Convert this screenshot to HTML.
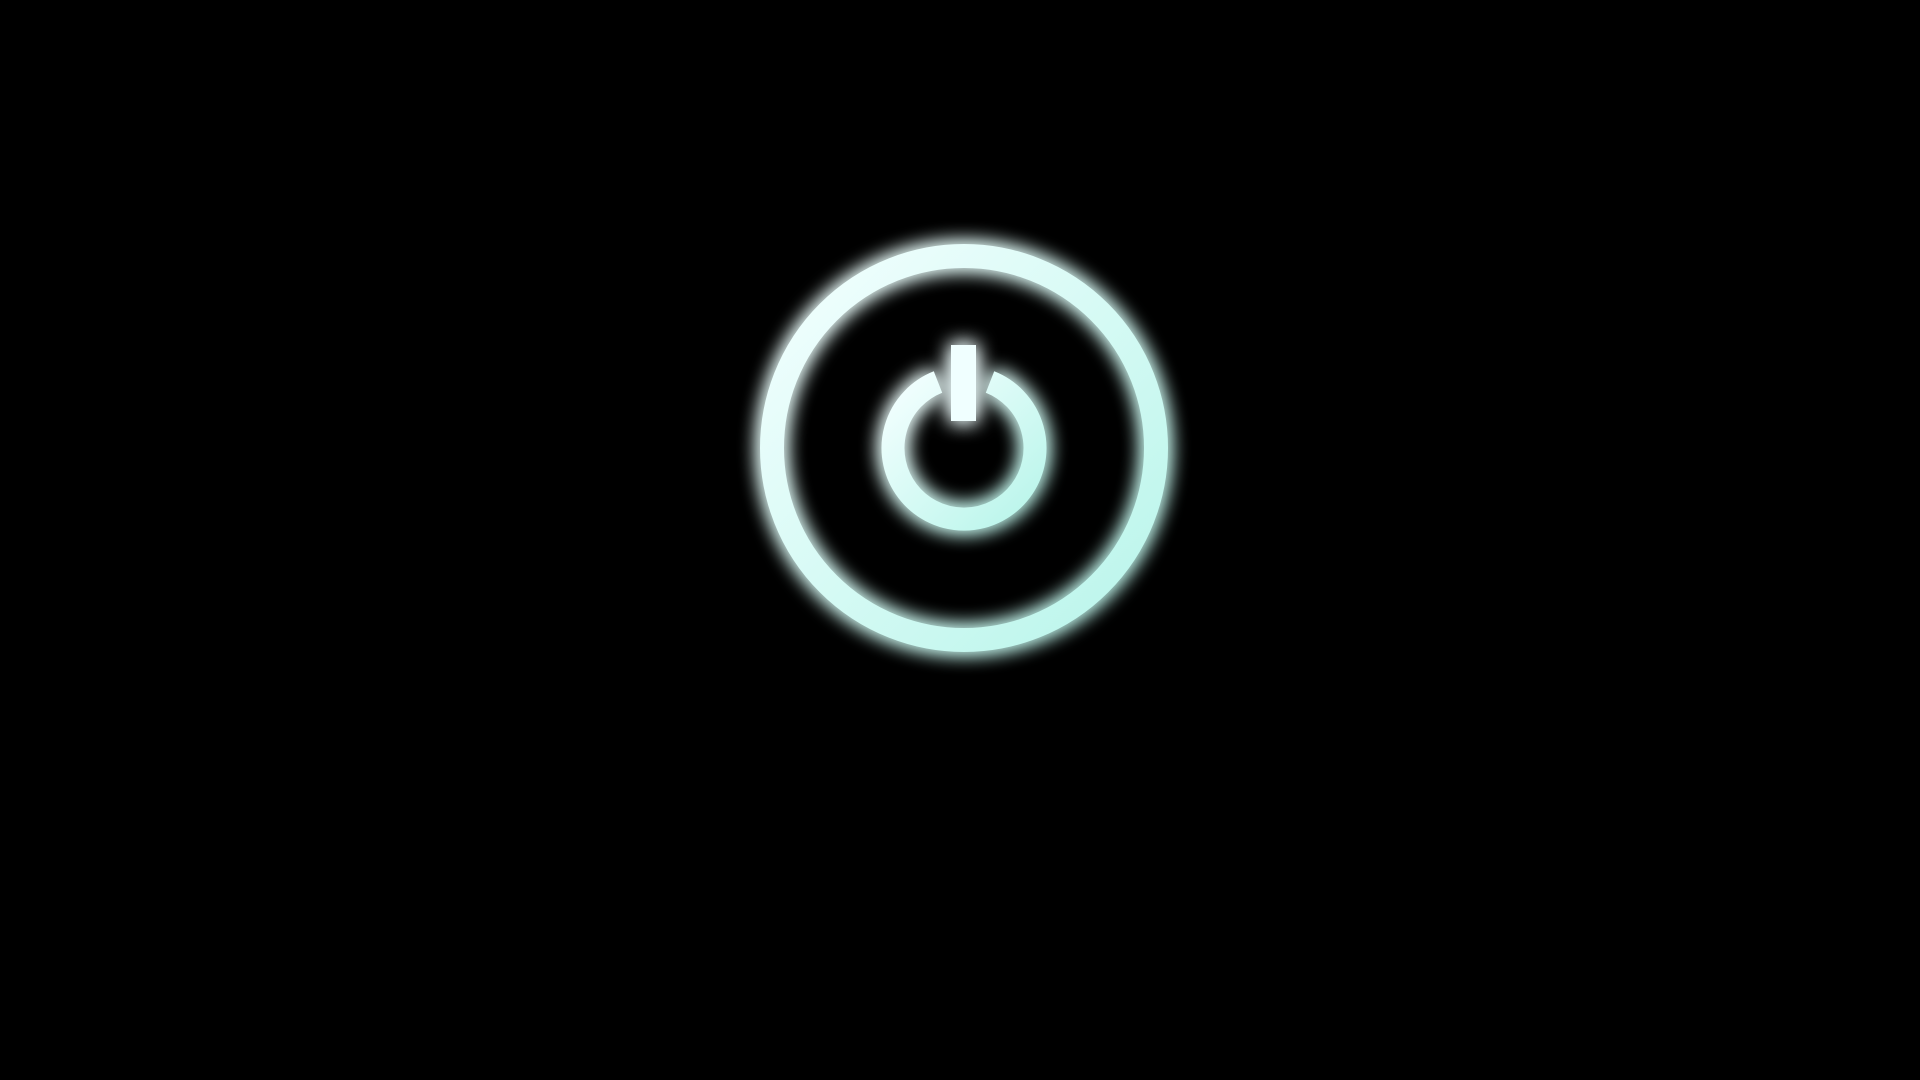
<!DOCTYPE html>
<html><head><meta charset="utf-8"><style>
html,body{margin:0;padding:0;background:#000;width:1920px;height:1080px;overflow:hidden}
svg{position:absolute;left:0;top:0}
</style></head><body>
<svg width="1920" height="1080" viewBox="0 0 1920 1080">
<defs>
<filter id="g" x="-50%" y="-50%" width="200%" height="200%">
<feGaussianBlur in="SourceGraphic" stdDeviation="10" result="b"/>
<feMerge><feMergeNode in="b"/><feMergeNode in="b"/><feMergeNode in="SourceGraphic"/></feMerge>
</filter>
<linearGradient id="lg" x1="0" y1="0" x2="1" y2="1">
<stop offset="0" stop-color="#f4ffff"/><stop offset="1" stop-color="#b8f5ea"/>
</linearGradient>
</defs>
<g filter="url(#g)">
<circle cx="964" cy="448" r="192" fill="none" stroke="url(#lg)" stroke-width="24"/>
<path d="M938 382 A71 71 0 1 0 990 382" fill="none" stroke="url(#lg)" stroke-width="23"/>
<rect x="951" y="345" width="25" height="76" fill="#f0ffff"/>
</g>
</svg>
</body></html>
